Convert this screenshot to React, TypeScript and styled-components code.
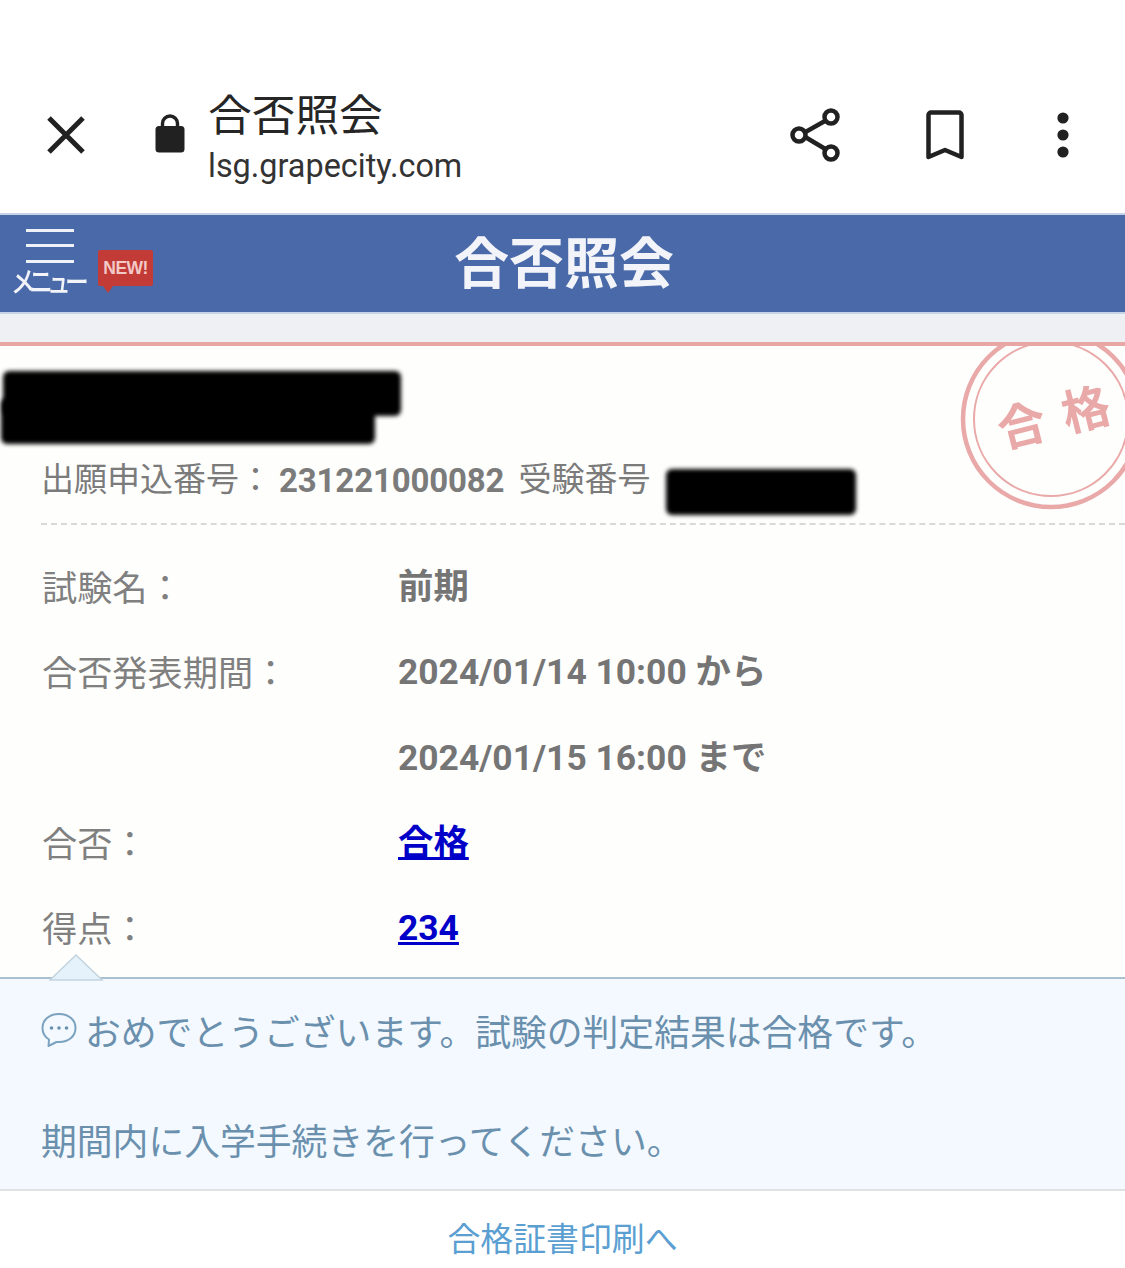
import React from "react";
import styled, { createGlobalStyle } from "styled-components";

const Global = createGlobalStyle`
  html, body { margin: 0; padding: 0; background: #fff; }
  body { font-family: "Roboto", "Noto Sans CJK JP", sans-serif; overflow: hidden; }
  * { box-sizing: border-box; }
`;

const Page = styled.div`
  width: 1125px;
  height: 1268px;
  display: flex;
  flex-direction: column;
  overflow: hidden;
  position: relative;
`;

const BrowserBar = styled.div`
  height: 213px;
  padding: 83px 0 0 0;
  display: flex;
  align-items: flex-start;
  background: #fff;
  color: #202124;
`;

const CloseSlot = styled.div`
  width: 155px;
  padding: 33px 0 0 47px;
  display: flex;
`;

const LockSlot = styled.div`
  width: 53px;
  padding-top: 31px;
  display: flex;
`;

const TitleBlock = styled.div`
  width: 582px;
  display: flex;
  flex-direction: column;
`;

const PageTitle = styled.div`
  font: 400 43.7px/58px "Noto Sans CJK JP", sans-serif;
  height: 58px;
  color: #262626;
`;

const PageUrl = styled.div`
  font: 400 32.4px/40px "Roboto", sans-serif;
  color: #333;
  margin-top: 5px;
`;

const Actions = styled.div`
  flex: 1;
  display: flex;
  padding-top: 24px;
`;

const ActionSlot = styled.div<{ $w: number }>`
  width: ${(p) => p.$w}px;
  display: flex;
`;

const Header = styled.div`
  height: 101px;
  background: #4a69a9;
  border-top: 2px solid #c6d2e6;
  border-bottom: 2px solid #c6d2e6;
  display: grid;
  grid-template-columns: 1fr auto 1fr;
  align-items: center;
  color: #f2f4f9;
`;

const MenuGroup = styled.div`
  display: flex;
  align-items: flex-start;
  padding-left: 13px;
`;

const MenuButton = styled.div`
  width: 73px;
  display: flex;
  flex-direction: column;
  align-items: center;
  margin-top: -2px;
`;

const MenuBars = styled.div`
  width: 48px;
  height: 34px;
  display: flex;
  flex-direction: column;
  justify-content: space-between;
`;

const MenuBar = styled.span`
  display: block;
  height: 3px;
  background: #eef1f7;
`;

const MenuLabel = styled.div`
  font: 500 29px/34px "Noto Sans CJK JP", sans-serif;
  letter-spacing: -7px;
  margin: 0 0 0 -5px;
  white-space: nowrap;
  transform: scaleX(0.82);
`;

const NewBadge = styled.div`
  position: relative;
  width: 55px;
  height: 36px;
  margin: 19px 0 0 12px;
  background: #c23b36;
  border-radius: 2px;
  color: #f3c9c7;
  font: 700 17.5px/36px "Liberation Sans", sans-serif;
  text-align: center;
  letter-spacing: -0.6px;
  &::after {
    content: "";
    position: absolute;
    left: 5px;
    bottom: -7px;
    border-left: 5px solid transparent;
    border-right: 5px solid transparent;
    border-top: 7px solid #c23b36;
  }
`;

const HeaderTitle = styled.h1`
  margin: -10px 0 0 3px;
  font: 700 54.9px/70px "Noto Sans CJK JP", sans-serif;
  white-space: nowrap;
`;

const Gap = styled.div`
  height: 28px;
  background: #eff0f3;
`;

const Rule = styled.div`
  height: 4px;
  background: #e8a6a5;
`;

const Content = styled.div`
  height: 631px;
  background: #fefefd;
  position: relative;
  overflow: hidden;
`;

const Blot = styled.div<{ $l: number; $t: number; $w: number; $h: number }>`
  position: absolute;
  left: ${(p) => p.$l}px;
  top: ${(p) => p.$t}px;
  width: ${(p) => p.$w}px;
  height: ${(p) => p.$h}px;
  background: #000;
  border-radius: 6px;
  filter: blur(2.2px);
`;

const Stamp = styled.svg`
  position: absolute;
  left: 950px;
  top: -12px;
`;

const StampText = styled.text`
  font: 700 48px "Noto Sans CJK JP", sans-serif;
  fill: #e9a9a8;
`;

const ApplicationRow = styled.div`
  margin: 109px 0 0 41px;
  height: 44px;
  display: flex;
  align-items: center;
  font: 400 33px/44px "Noto Sans CJK JP", sans-serif;
  color: #7b7b7b;
  white-space: nowrap;
`;

const AppNumber = styled.span`
  font: 700 33px/44px "Roboto", sans-serif;
  letter-spacing: -0.15px;
  margin: 0 14px 0 7px;
  padding-top: 7px;
`;

const Dashed = styled.div`
  margin: 24px 0 0 41px;
  border-top: 2px dashed #d9d9d9;
`;

const InfoGrid = styled.div`
  margin: 18px 0 0 42px;
  display: grid;
  grid-template-columns: 356px 1fr;
  grid-auto-rows: 85.25px;
`;

const Label = styled.div`
  font: 400 35.2px/85px "Noto Sans CJK JP", sans-serif;
  color: #808080;
  white-space: nowrap;
`;

const Value = styled.div`
  font: 700 35.4px/85px "Roboto", "Noto Sans CJK JP", sans-serif;
  color: #757575;
  white-space: nowrap;
  padding-top: 2px;
`;

const ResultLink = styled.a`
  color: #0000c8;
  font: 700 35.4px/85px "Roboto", "Noto Sans CJK JP", sans-serif;
  text-decoration: underline;
`;

const Message = styled.div`
  position: relative;
  height: 214px;
  background: #f3f9fe;
  border-top: 2px solid #a9c0cf;
  border-bottom: 2px solid #dfe2e5;
  padding: 26px 0 0 41px;
  color: #6a90ae;
  font: 400 35.8px/50px "Noto Sans CJK JP", sans-serif;
  white-space: nowrap;
`;

const Pointer = styled.svg`
  position: absolute;
  left: 49px;
  top: -25px;
`;

const MessageLine = styled.div`
  display: flex;
  align-items: center;
  height: 50px;
  & + & {
    margin-top: 59px;
  }
`;

const ChatIcon = styled.svg`
  margin: 0 8px 0 0;
`;

const Footer = styled.div`
  flex: 1;
  background: #fff;
  display: flex;
  justify-content: center;
  padding-top: 22px;
  color: #5b9fd2;
  font: 400 32.9px/48px "Noto Sans CJK JP", sans-serif;
`;

const IconGlyph = styled.svg`
  display: block;
  color: #212121;
`;

export default function App() {
  return (
    <Page>
      <Global />
      <BrowserBar>
        <CloseSlot>
          <IconGlyph width="38" height="38" viewBox="0 0 38 38">
            <path d="M2 2 L36 36 M36 2 L2 36" stroke="currentColor" strokeWidth="5" fill="none" />
          </IconGlyph>
        </CloseSlot>
        <LockSlot>
          <IconGlyph width="30" height="39" viewBox="0 0 30 39">
            <rect x="0.5" y="12" width="29" height="26.5" rx="3.5" fill="currentColor" />
            <path d="M7.5 14 V9.5 a7.5 7.5 0 0 1 15 0 V14" stroke="currentColor" strokeWidth="3.4" fill="none" />
          </IconGlyph>
        </LockSlot>
        <TitleBlock>
          <PageTitle>合否照会</PageTitle>
          <PageUrl>lsg.grapecity.com</PageUrl>
        </TitleBlock>
        <Actions>
          <ActionSlot $w={136}>
            <IconGlyph width="52" height="56" viewBox="0 0 52 56">
              <path d="M42 10 L11 27.5 L42 46" stroke="currentColor" strokeWidth="4.5" fill="none" />
              <circle cx="41" cy="10" r="6.5" fill="#fff" stroke="currentColor" strokeWidth="4.5" />
              <circle cx="9" cy="28" r="6.5" fill="#fff" stroke="currentColor" strokeWidth="4.5" />
              <circle cx="41" cy="46" r="6.5" fill="#fff" stroke="currentColor" strokeWidth="4.5" />
            </IconGlyph>
          </ActionSlot>
          <ActionSlot $w={130}>
            <IconGlyph width="38" height="50" viewBox="0 0 38 50" style={{ marginTop: 3 }}>
              <path d="M2.5 47 V5 a2.5 2.5 0 0 1 2.5 -2.5 H33 a2.5 2.5 0 0 1 2.5 2.5 V47 L19 40 Z" stroke="currentColor" strokeWidth="4.5" fill="none" strokeLinejoin="round" />
            </IconGlyph>
          </ActionSlot>
          <ActionSlot $w={20}>
            <IconGlyph width="14" height="46" viewBox="0 0 14 46" style={{ marginTop: 5 }}>
              <circle cx="7" cy="6" r="5.6" fill="currentColor" />
              <circle cx="7" cy="23" r="5.6" fill="currentColor" />
              <circle cx="7" cy="40" r="5.6" fill="currentColor" />
            </IconGlyph>
          </ActionSlot>
        </Actions>
      </BrowserBar>
      <Header>
        <MenuGroup>
          <MenuButton>
            <MenuBars>
              <MenuBar />
              <MenuBar />
              <MenuBar />
            </MenuBars>
            <MenuLabel>メニュー</MenuLabel>
          </MenuButton>
          <NewBadge>NEW!</NewBadge>
        </MenuGroup>
        <HeaderTitle>合否照会</HeaderTitle>
        <div />
      </Header>
      <Gap />
      <Rule />
      <Content>
        <Blot $l={3} $t={25} $w={398} $h={45} />
        <Blot $l={1} $t={52} $w={374} $h={46} />
        <Blot $l={666} $t={123} $w={190} $h={46} />
        <Stamp width="175" height="190" viewBox="0 0 175 190">
          <circle cx="101" cy="85" r="88" fill="none" stroke="#e9a9a8" strokeWidth="4.5" />
          <circle cx="101" cy="85" r="77" fill="none" stroke="#e9a9a8" strokeWidth="2" />
          <g transform="rotate(-14 104 84.5)">
            <StampText x="47" y="101">合</StampText>
            <StampText x="113" y="101">格</StampText>
          </g>
        </Stamp>
        <ApplicationRow>
          出願申込番号：
          <AppNumber>231221000082</AppNumber>
          受験番号
        </ApplicationRow>
        <Dashed />
        <InfoGrid>
          <Label>試験名：</Label>
          <Value>前期</Value>
          <Label>合否発表期間：</Label>
          <Value>2024/01/14 10:00 から</Value>
          <div />
          <Value>2024/01/15 16:00 まで</Value>
          <Label>合否：</Label>
          <Value><ResultLink href="#">合格</ResultLink></Value>
          <Label>得点：</Label>
          <Value><ResultLink href="#">234</ResultLink></Value>
        </InfoGrid>
      </Content>
      <Message>
        <Pointer width="56" height="28" viewBox="0 0 56 28">
          <path d="M1 26 L27 1 L53 26 Z" fill="#e6f2fb" stroke="#c3d4de" strokeWidth="1.5" />
        </Pointer>
        <MessageLine>
          <ChatIcon width="36" height="36" viewBox="0 0 36 36">
            <path d="M18 2 C8 2 1.5 8 1.5 16 C1.5 21 4 25 8 27.5 L7.5 34 L15.5 30 C16.5 30 17 30 18 30 C28 30 34.5 24 34.5 16 C34.5 8 28 2 18 2 Z" fill="none" stroke="#7ba3c0" strokeWidth="2" strokeLinejoin="round" />
            <circle cx="10.5" cy="16" r="1.8" fill="#6a90ae" />
            <circle cx="18" cy="16" r="1.8" fill="#6a90ae" />
            <circle cx="25.5" cy="16" r="1.8" fill="#6a90ae" />
          </ChatIcon>
          おめでとうございます。試験の判定結果は合格です。
        </MessageLine>
        <MessageLine>期間内に入学手続きを行ってください。</MessageLine>
      </Message>
      <Footer>合格証書印刷へ</Footer>
    </Page>
  );
}
